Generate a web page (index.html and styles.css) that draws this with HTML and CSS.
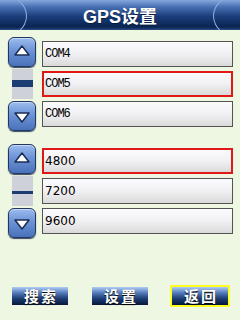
FILE: index.html
```html
<!DOCTYPE html>
<html lang="zh-CN">
<head>
  <meta charset="UTF-8">
  <meta name="viewport" content="width=device-width, initial-scale=1.0">
  <title>GPS设置</title>
  <link rel="stylesheet" href="styles.css">
</head>
<body>
  <div class="screen">
    <div class="titlebar">
      <span class="arc arc-left"></span>
      <h1>GPS设置</h1>
      <span class="arc arc-right"></span>
    </div>

    <div class="group group-port">
      <div class="spinner">
        <button class="arrow up"><svg width="16" height="11" viewBox="0 0 16 11"><polygon points="8,1 15,10 1,10" fill="#fff" stroke="#1b2d55" stroke-width="1.5" stroke-linejoin="round"/></svg></button>
        <div class="track"><span class="thumb thumb-mid"></span></div>
        <button class="arrow down"><svg width="16" height="11" viewBox="0 0 16 11"><polygon points="1,1 15,1 8,10" fill="#fff" stroke="#1b2d55" stroke-width="1.5" stroke-linejoin="round"/></svg></button>
      </div>
      <div class="list">
        <div class="item">COM4</div>
        <div class="item selected">COM5</div>
        <div class="item">COM6</div>
      </div>
    </div>

    <div class="group group-baud">
      <div class="spinner">
        <button class="arrow up"><svg width="16" height="11" viewBox="0 0 16 11"><polygon points="8,1 15,10 1,10" fill="#fff" stroke="#1b2d55" stroke-width="1.5" stroke-linejoin="round"/></svg></button>
        <div class="track"><span class="thumb thumb-thin"></span></div>
        <button class="arrow down"><svg width="16" height="11" viewBox="0 0 16 11"><polygon points="1,1 15,1 8,10" fill="#fff" stroke="#1b2d55" stroke-width="1.5" stroke-linejoin="round"/></svg></button>
      </div>
      <div class="list">
        <div class="item selected">4800</div>
        <div class="item">7200</div>
        <div class="item">9600</div>
      </div>
    </div>

    <div class="toolbar">
      <button class="tool">搜索</button>
      <button class="tool">设置</button>
      <button class="tool active">返回</button>
    </div>
  </div>
</body>
</html>
```

FILE: styles.css
```css
html, body {
  margin: 0;
  padding: 0;
}
body {
  width: 240px;
  height: 320px;
  overflow: hidden;
  background-color: #eef7e2;
  font-family: 'Liberation Sans', 'Noto Sans CJK SC', sans-serif;
}
.screen {
  display: flex;
  flex-direction: column;
  height: 320px;
}
.titlebar {
  position: relative;
  height: 30px;
  overflow: hidden;
  display: flex;
  align-items: center;
  justify-content: center;
  background: linear-gradient(to bottom, #86a8dd 0%, #4a72b4 22%, #1a3d7a 55%, #0b2452 90%, #2a4a80 100%);
}
.titlebar h1 {
  margin: 0;
  color: #fff;
  font-size: 18px;
  font-weight: bold;
  text-shadow: 0 1px 1px #0a1a3a;
}
.arc {
  position: absolute;
  top: -6px;
  width: 50px;
  height: 42px;
  border: 1px solid #8eaedf;
  border-radius: 50%;
}
.arc-left {
  left: -25px;
}
.arc-right {
  right: -25px;
}

.group {
  display: flex;
  gap: 6px;
  padding: 0 7px 0 8px;
}
.group-port {
  margin-top: 7px;
}
.group-baud {
  margin-top: 13px;
}
.spinner {
  width: 28px;
  display: flex;
  flex-direction: column;
  align-items: center;
  gap: 2px;
}
.arrow {
  width: 28px;
  height: 30px;
  padding: 0;
  display: flex;
  align-items: center;
  justify-content: center;
  border: 1px solid #22365e;
  border-radius: 6px;
  background: linear-gradient(to bottom, #9dbcef 0%, #6c93d6 45%, #4a72bb 100%);
  box-shadow: inset 0 1px 0 #c8dafa, 0 1px 1px #3a4a66;
}
.arrow.up svg {
  margin-bottom: 4px;
}
.arrow.down svg {
  margin-top: 2px;
}
.track {
  width: 21px;
  height: 30px;
  background-color: #cfd1d8;
  display: flex;
  flex-direction: column;
}
.thumb {
  display: block;
  background-color: #1c3c74;
}
.thumb-mid {
  height: 7px;
  margin-top: 11px;
}
.thumb-thin {
  height: 3px;
  margin-top: 15px;
}
.list {
  flex: 1;
  display: flex;
  flex-direction: column;
  gap: 4px;
  padding-top: 4px;
}
.item {
  height: 26px;
  box-sizing: border-box;
  display: flex;
  align-items: center;
  padding-left: 2px;
  border: 1px solid #545454;
  background: linear-gradient(to bottom, #fbfbfd 0%, #f1f1f4 50%, #dadada 100%);
  color: #000;
  font-size: 12px;
  font-family: 'DejaVu Sans', sans-serif;
}
.group-port .item {
  font-family: 'Liberation Mono', monospace;
  font-size: 12px;
  letter-spacing: -1px;
}
.item.selected {
  border: 2px solid #e01818;
  padding-left: 1px;
}

.toolbar {
  margin-top: auto;
  margin-bottom: 13px;
  display: flex;
  gap: 20px;
  padding-left: 10px;
}
.tool {
  width: 60px;
  height: 22px;
  box-sizing: border-box;
  padding: 0;
  border: 2px solid transparent;
  background: linear-gradient(to bottom, #b0cdf5 0%, #5a80bf 30%, #1c3c72 65%, #06173a 100%);
  background-clip: padding-box;
  color: #fff;
  font-family: 'Noto Sans CJK SC', sans-serif;
  font-size: 15px;
  font-weight: bold;
  line-height: 18px;
  letter-spacing: 2px;
  text-indent: 2px;
  text-shadow: 0 1px 1px #000;
}
.tool.active {
  border-color: #ffff20;
}
```
